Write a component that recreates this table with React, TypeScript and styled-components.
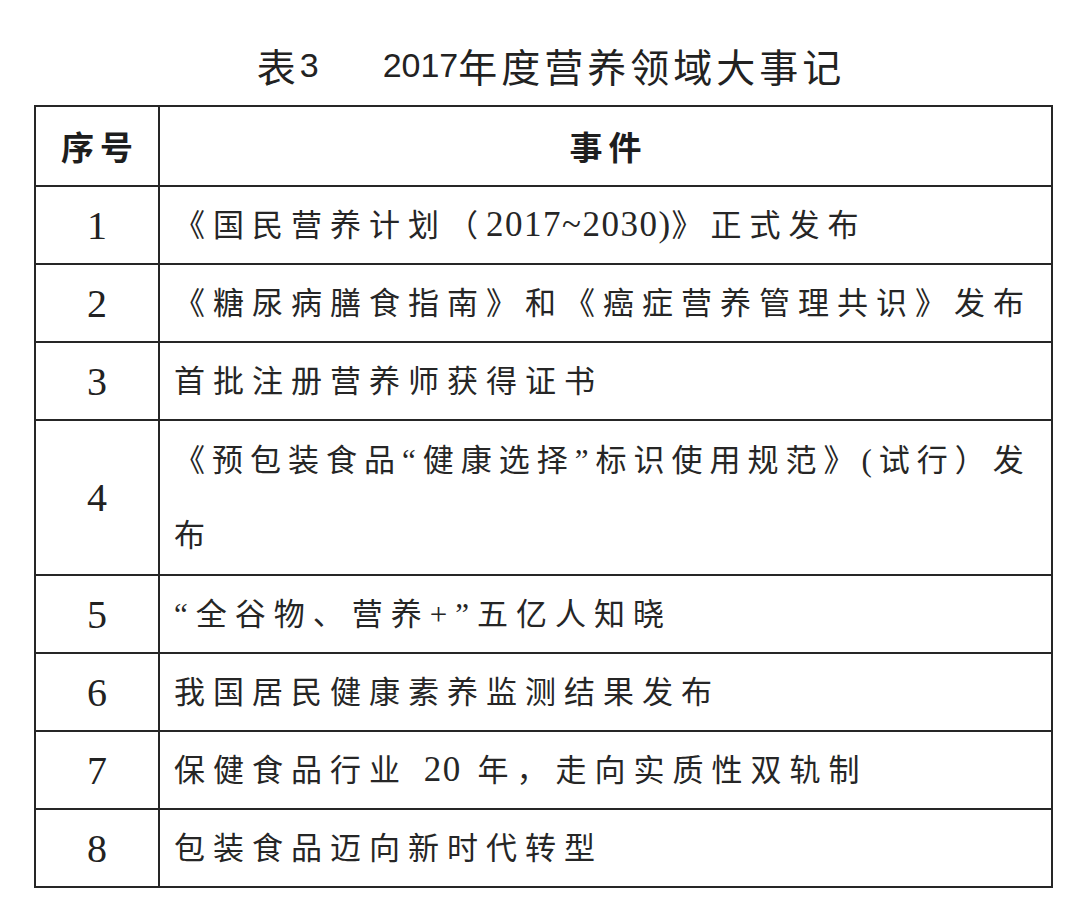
import React from "react";
import styled, { createGlobalStyle } from "styled-components";

const GlobalStyle = createGlobalStyle`
  html, body {
    margin: 0;
    padding: 0;
    background: #ffffff;
  }
  body {
    font-family: "Liberation Serif", "Noto Sans CJK SC", serif;
    color: #222222;
  }
`;

const Page = styled.div`
  width: 1080px;
  padding: 40px 0 0 0;
  box-sizing: border-box;
`;

const Title = styled.h1`
  margin: 0;
  height: 50px;
  display: flex;
  align-items: center;
  justify-content: center;
  padding-left: 22px;
  font-weight: 400;
  color: #222222;
`;

const TitleCjk = styled.span`
  font-family: "Noto Sans CJK SC", sans-serif;
  font-size: 39px;
  letter-spacing: 4px;
`;

const TitleNum = styled.span<{ $gapAfter?: number }>`
  font-family: "Liberation Sans", "Noto Sans CJK SC", sans-serif;
  font-size: 34px;
  margin-right: ${(p) => p.$gapAfter ?? 0}px;
`;

const Table = styled.table`
  margin: 15px 0 0 34px;
  width: 1019px;
  border-collapse: collapse;
  border: 2px solid #262626;
  table-layout: fixed;
`;

const Cell = styled.td<{ $h: number }>`
  height: ${(p) => p.$h}px;
  border: 2px solid #262626;
  padding: 0;
  vertical-align: middle;
  box-sizing: border-box;
`;

const HeadCell = styled.th`
  height: 78px;
  border: 2px solid #262626;
  padding: 0;
  text-align: center;
  vertical-align: middle;
  font-family: "Noto Sans CJK SC", sans-serif;
  font-weight: 700;
  font-size: 33px;
  letter-spacing: 6px;
  text-indent: 6px;
  color: #1e1e1e;
`;

const NumCell = styled(Cell)`
  width: 124px;
  text-align: center;
  font-family: "Liberation Serif", serif;
  font-size: 40px;
  color: #222222;
`;

const EventCell = styled(Cell)`
  padding-left: 14px;
  font-family: "Liberation Serif", "Noto Sans CJK SC", serif;
  font-size: 31px;
  color: #262626;
  white-space: nowrap;
`;

const Line = styled.div<{ $tight?: boolean }>`
  line-height: 75px;
  letter-spacing: ${(p) => (p.$tight ? 7 : 8)}px;
`;

const Latin = styled.span`
  font-family: "Liberation Serif", serif;
  font-size: 35px;
  letter-spacing: 1.5px;
`;

type Row = { n: string; h: number; lines: string[]; tight?: boolean };

const rows: Row[] = [
  { n: "1", h: 78, lines: ["《国民营养计划（2017~2030)》正式发布"] },
  { n: "2", h: 78, lines: ["《糖尿病膳食指南》和《癌症营养管理共识》发布"] },
  { n: "3", h: 78, lines: ["首批注册营养师获得证书"] },
  {
    n: "4",
    h: 155,
    tight: true,
    lines: ["《预包装食品“健康选择”标识使用规范》(试行）发", "布"],
  },
  { n: "5", h: 78, lines: ["“全谷物、营养+”五亿人知晓"] },
  { n: "6", h: 78, lines: ["我国居民健康素养监测结果发布"] },
  { n: "7", h: 78, lines: ["保健食品行业 20 年，走向实质性双轨制"] },
  { n: "8", h: 78, lines: ["包装食品迈向新时代转型"] },
];

function renderText(text: string) {
  return text.split(/([0-9~]+\)?)/).map((part, i) =>
    /^[0-9~]+\)?$/.test(part) ? <Latin key={i}>{part}</Latin> : part
  );
}

export default function App() {
  return (
    <>
      <GlobalStyle />
      <Page>
        <Title>
          <TitleCjk>表</TitleCjk>
          <TitleNum $gapAfter={64}>3</TitleNum>
          <TitleNum>2017</TitleNum>
          <TitleCjk>年度营养领域大事记</TitleCjk>
        </Title>
        <Table>
          <colgroup>
            <col style={{ width: 124 }} />
            <col />
          </colgroup>
          <thead>
            <tr>
              <HeadCell>序号</HeadCell>
              <HeadCell>事件</HeadCell>
            </tr>
          </thead>
          <tbody>
            {rows.map((r) => (
              <tr key={r.n}>
                <NumCell $h={r.h}>{r.n}</NumCell>
                <EventCell $h={r.h}>
                  {r.lines.map((l, i) => (
                    <Line key={i} $tight={r.tight}>
                      {renderText(l)}
                    </Line>
                  ))}
                </EventCell>
              </tr>
            ))}
          </tbody>
        </Table>
      </Page>
    </>
  );
}
